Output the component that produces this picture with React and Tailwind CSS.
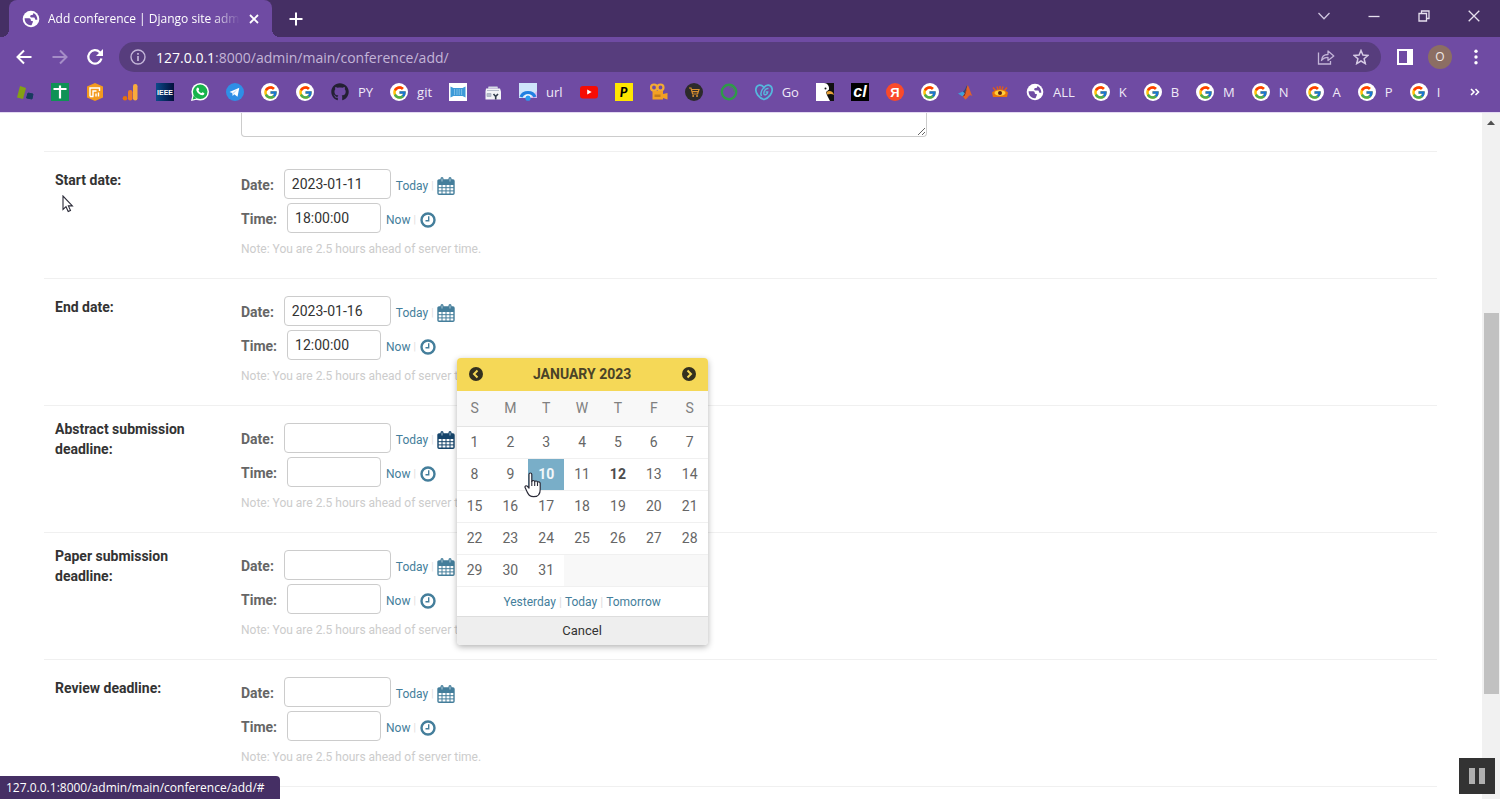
import React, { useState } from "react";
import { FcGoogle } from "react-icons/fc";
import { FaGithub } from "react-icons/fa";

const GoogleIcon = () => (
  <span className="w-[18px] h-[18px] rounded-full bg-white flex items-center justify-center">
    <FcGoogle size={15} />
  </span>
);

const GlobeIcon = () => (
  <svg width="18" height="18" viewBox="0 0 18 18">
    <circle cx="9" cy="9" r="8.300" fill="#fff" />
    <path
      d="M2.600 8.200h4.600c1.200 0 1.500.8 1.500 1.600 0 .9.500 1.200 1.400 1.200.8 0 1 .6.700 1.300l-1.300 2.900c-2.600.4-4.200-.8-5.400-2.200-1-1.300-1.500-3-1.500-4.800z"
      fill="#6f4ba3"
    />
    <path
      d="M11.200 2.900c.4 1.500-.4 2-1.700 2.100-1 .1-1.300.6-1.300 1.300 0 1 .9 1.300 1.900 1.300h1.500c.9 0 1.200.5 1.400 1.300.2.700.9 1 2.300.9.200-3.200-1.300-5.800-4.100-6.900z"
      fill="#6f4ba3"
    />
  </svg>
);

const BlocksIcon = () => (
  <svg width="18" height="18" viewBox="0 0 18 18">
    <path d="M4 3l6 2-3 11-6-1.500z" fill="#84a014" />
    <path d="M12 10l5 1-1 5-5.500-1z" fill="#173a5e" stroke="#173a5e" strokeLinejoin="round" />
  </svg>
);

const SheetIcon = () => (
  <svg width="18" height="18" viewBox="0 0 18 18">
    <path d="M0 0h18v18H0z" fill="#0f9255" />
    <path d="M2.500 6h13M9 2.500v13" stroke="#fff" strokeWidth="2.200" />
  </svg>
);

const HexIcon = () => (
  <svg width="18" height="18" viewBox="0 0 18 18">
    <path d="M9 0l8 3.500v11L9 18l-8-3.500v-11z" fill="#f39a1e" />
    <path d="M4 13.500V5h9.500v3M4 13.500h3.500M7 13.500V8h3.500M10 13.500v-3M12.500 13.500v-4" fill="none" stroke="#fff" strokeWidth="1.400" />
  </svg>
);

const AnalyticsIcon = () => (
  <svg width="18" height="18" viewBox="0 0 18 18">
    <rect x="12" y="1" width="4.500" height="16.500" rx="2.200" fill="#f9ab3c" />
    <rect x="7" y="7" width="4.500" height="10.500" rx="2.200" fill="#ee7a26" />
    <circle cx="4" cy="15.200" r="2.300" fill="#e8710a" />
  </svg>
);

const IeeeIcon = () => (
  <span className="w-[18px] h-[18px] bg-gradient-to-r from-[#0d4a8a] to-[#03103c] flex items-center justify-center text-[7px] leading-none font-bold font-['Liberation_Sans',sans-serif] text-white">
    IEEE
  </span>
);

const WhatsappIcon = () => (
  <svg width="18" height="18" viewBox="0 0 18 18">
    <circle cx="9.200" cy="8.800" r="8.800" fill="#fff" />
    <path d="M0 18l1.500-6 5 4.500z" fill="#fff" />
    <circle cx="9.200" cy="8.800" r="7.300" fill="#19b34c" />
    <path d="M1.600 16.500l1-4 3 3z" fill="#19b34c" />
    <path
      d="M6.300 4.800c.9-.7 1.400.3 1.800 1.500.2.700-.7.900-.5 1.500.6 1.100 1.400 1.800 2.500 2.300.6.200.9-1 1.500-.8 1.200.5 2.200 1 1.600 1.900-.8 1.300-2.400 1.200-3.900.5-1.900-.9-3.300-2.300-3.900-4.100-.3-1.100.1-2.200.9-2.800z"
      fill="#fff"
    />
  </svg>
);

const TelegramIcon = () => (
  <svg width="18" height="18" viewBox="0 0 18 18">
    <circle cx="9" cy="9" r="9" fill="#2f8fe6" />
    <path d="M3.500 9l9.800-4.200-1.800 8.900-3.300-2.400-1.500 1.600-.4-3z" fill="#fff" />
    <path d="M6.300 10l5-3.600-3.600 4.300" fill="#bcd9f5" />
  </svg>
);

const BarcodeIcon = () => (
  <svg width="18" height="18" viewBox="0 0 18 18">
    <path d="M0 0h18v18H0z" fill="#fff" />
    <path d="M1.500 3.500L4.500 5h9l3-1.500v11l-3-1.500h-9l-3 1.500z" fill="#3d9ad8" />
    <path d="M5.500 6v6M8 6v6M10.200 6v6M12.600 6v6" stroke="#8cc6ea" strokeWidth=".8" />
  </svg>
);

const StoreIcon = () => (
  <svg width="18" height="18" viewBox="0 0 18 18">
    <path d="M4.500 3.500h9l.5 2H4z" fill="#d5dbe6" />
    <path d="M2 5.500h14l1 3v8H1.500v-8z" fill="#f2f3f7" />
    <path d="M3 7.500h12M3 10.500h4v3H3z" fill="#b5bccb" stroke="#a6adbf" strokeWidth=".8" />
    <path d="M9.500 11l2.200 2.500v3M14 11l-2.300 2.500" fill="none" stroke="#303c4c" strokeWidth="1.600" />
  </svg>
);

const UrlIcon = () => (
  <svg width="18" height="18" viewBox="0 0 18 18">
    <path d="M0 0h18v15H0z" fill="#cfe4fb" />
    <path d="M11 15l7-7v7z" fill="#d9b8f0" />
    <path d="M2 14a7.500 7 0 0 1 14 0" fill="none" stroke="#217fe2" strokeWidth="3.200" />
    <path d="M6 14a3.500 3.500 0 0 1 6 0" fill="none" stroke="#fff" strokeWidth="1.500" />
    <circle cx="9" cy="15.200" r="2.600" fill="#2b9af0" />
  </svg>
);

const YoutubeIcon = () => (
  <svg width="18" height="18" viewBox="0 0 18 18">
    <rect x="0" y="3" width="18" height="12.500" rx="3" fill="#f60c05" />
    <path d="M7.200 6.500v5l4.500-2.500z" fill="#fff" />
  </svg>
);

const ParkIcon = () => (
  <span className="w-[18px] h-[18px] bg-[#ffe600] flex items-center justify-center text-[13px] leading-none font-black italic font-['Lato',sans-serif] text-black">
    P
  </span>
);

const CameraIcon = () => (
  <svg width="18" height="18" viewBox="0 0 18 18">
    <circle cx="4" cy="4.500" r="3" fill="none" stroke="#f3aa33" strokeWidth="2.200" />
    <circle cx="10.500" cy="4.500" r="3" fill="none" stroke="#f3aa33" strokeWidth="2.200" />
    <path d="M2.500 8h10.500v8.500H2.500zM13 11l4.500-1v6.500L13 15z" fill="#f3a024" />
    <path d="M4.500 11.500h6v2.500h-6z" fill="#c47a1b" />
  </svg>
);

const CartIcon = () => (
  <svg width="18" height="18" viewBox="0 0 18 18">
    <circle cx="9" cy="9" r="9" fill="#2c2a2b" />
    <path d="M4 5h2l1.600 6h5l1.400-4.500H6.600M7.500 8.700h5.700" fill="none" stroke="#d9902f" strokeWidth="1.200" />
    <circle cx="8.200" cy="13" r="1" fill="#d9902f" />
    <circle cx="12" cy="13" r="1" fill="#d9902f" />
  </svg>
);

const RingIcon = () => (
  <svg width="18" height="18" viewBox="0 0 18 18">
    <circle cx="9" cy="9" r="7.200" fill="none" stroke="#2f9a48" strokeWidth="2.400" />
    <path d="M9 4a5 5 0 0 1 5 5" fill="none" stroke="#4f7d62" strokeWidth="1" />
  </svg>
);

const GodaddyIcon = () => (
  <svg width="18" height="18" viewBox="0 0 18 18">
    <path
      d="M9 16.500C4 15 0 10 1 5.500 2 1.500 6.500 1 9 4.500c2.500-3.500 7-3 8 1 1 4.500-3 9.500-8 11z"
      fill="none"
      stroke="#55b8dd"
      strokeWidth="1.700"
    />
    <path d="M9 4.500C6.500 7 5 10 6.500 13M13.500 5.500c-3-.5-5 3-4.500 5.500.5 1.500 3.500.5 3.700-2h-2" fill="none" stroke="#55b8dd" strokeWidth="1.500" />
  </svg>
);

const EagleIcon = () => (
  <svg width="18" height="18" viewBox="0 0 18 18">
    <path d="M0 0h18v18H0z" fill="#111" />
    <path d="M0 0h8c3.500 0 5.500 3 5 6.500l-3 2.500c.5 2.500 2 5 4 9H0z" fill="#fff" />
    <path d="M10.500 9c3-2 6.500-1 7.500 3-2-1.500-4.500-1-7-.5z" fill="#e8a33a" />
    <circle cx="9.500" cy="5.500" r="1" fill="#111" />
  </svg>
);

const ClIcon = () => (
  <span className="w-[18px] h-[18px] bg-black flex items-center justify-center text-[16px] leading-none font-bold italic font-['Liberation_Sans',sans-serif] text-white">
    cl
  </span>
);

const YandexIcon = () => (
  <span className="w-[18px] h-[18px] rounded-full bg-[#fa4a2a] flex items-center justify-center text-[13px] leading-none font-bold font-['Liberation_Sans',sans-serif] text-white">
    Я
  </span>
);

const MatlabIcon = () => (
  <svg width="18" height="18" viewBox="0 0 18 18">
    <path d="M2 10.500l5-2 2.500 2.500-3 2.500z" fill="#3f9fd8" />
    <path d="M7 8.500c2-.5 3-5.500 4.500-6.500L9.500 11z" fill="#2b4a74" />
    <path d="M11.500 2c1.500 1 3 8 5 11-2-1.500-3-1-4.500 1-1 1.500-2 2.500-3 2.500-.5-1.500-1.500-2.500-2.500-3 2.500-1.500 4-8 5-11.500z" fill="#e0622a" />
    <path d="M11.500 2c-1 4-1 7-3 11-.5 0-1.500.5-2 .5 3-2 4-8 5-11.500z" fill="#7c2a21" />
  </svg>
);

const EyeIcon = () => (
  <svg width="18" height="18" viewBox="0 0 18 18">
    <path d="M2 4.500l2.500 3M6 3.500l1 3M9 3v3M12 3.500l-1 3M16 4.500l-2.500 3" stroke="#dd5a1d" strokeWidth="1.500" />
    <path d="M1 9.500c4-4.500 12-4.500 16 0l-1 4.500H2z" fill="#e8730c" />
    <ellipse cx="9" cy="10" rx="5.500" ry="2.700" fill="#ffce3d" />
    <circle cx="9" cy="10" r="2" fill="#5d1f12" />
  </svg>
);

const GithubIcon = () => <FaGithub size={18} color="#232033" />;

const bookmarks = [
  { icon: BlocksIcon },
  { icon: SheetIcon },
  { icon: HexIcon },
  { icon: AnalyticsIcon },
  { icon: IeeeIcon },
  { icon: WhatsappIcon },
  { icon: TelegramIcon },
  { icon: GoogleIcon },
  { icon: GoogleIcon },
  { icon: GithubIcon, label: "PY" },
  { icon: GoogleIcon, label: "git" },
  { icon: BarcodeIcon },
  { icon: StoreIcon },
  { icon: UrlIcon, label: "url" },
  { icon: YoutubeIcon },
  { icon: ParkIcon },
  { icon: CameraIcon },
  { icon: CartIcon },
  { icon: RingIcon },
  { icon: GodaddyIcon, label: "Go" },
  { icon: EagleIcon },
  { icon: ClIcon },
  { icon: YandexIcon },
  { icon: GoogleIcon },
  { icon: MatlabIcon },
  { icon: EyeIcon },
  { icon: GlobeIcon, label: "ALL" },
  { icon: GoogleIcon, label: "K" },
  { icon: GoogleIcon, label: "B" },
  { icon: GoogleIcon, label: "M" },
  { icon: GoogleIcon, label: "N" },
  { icon: GoogleIcon, label: "A" },
  { icon: GoogleIcon, label: "P" },
  { icon: GoogleIcon, label: "I" },
];

const CalendarIcon = ({ color }) => (
  <svg width="18" height="18" viewBox="0 0 18 18" fill="none" stroke={color}>
    <path d="M1 3h16v4H1z" fill={color} stroke="none" />
    <rect x="1" y="3" width="16" height="14.200" rx="1" strokeWidth="1.400" />
    <path d="M1 7.500h16M1 10.700h16M1 13.900h16M5 7v10M9 7v10M13 7v10" strokeWidth="1" />
    <path d="M5 1.500v3M13 1.500v3" strokeWidth="3" strokeLinecap="round" />
    <path d="M5 1.500v3M13 1.500v3" stroke="#cfe0e8" strokeWidth=".8" />
  </svg>
);

const ClockIcon = () => (
  <svg width="16" height="16" viewBox="0 0 16 16" fill="none" stroke="#447e9b">
    <circle cx="8" cy="8" r="6.500" strokeWidth="2.400" />
    <path d="M8.700 4.200v4.500H5.500" strokeWidth="1.400" />
  </svg>
);

const Chevron = ({ flip }) => (
  <svg width="14" height="14" viewBox="0 0 14 14">
    <circle cx="7" cy="7" r="7" fill="#33301f" />
    <path d={flip ? "M5.500 3.500L9 7l-3.500 3.500" : "M8.500 3.500L5 7l3.500 3.500"} fill="none" stroke="#f5d857" strokeWidth="2" />
  </svg>
);

const HandCursor = () => (
  <svg className="absolute -left-1 top-[13px] z-10" width="18" height="26" viewBox="0 0 18 26">
    <path
      d="M5 2.500c0-2 2.800-2 2.800 0v7c.2-1.400 2.800-1.300 2.900.3.300-1.200 2.700-1.100 2.800.6.400-1 2.600-.8 2.700 1v6c0 4-2 7.300-6.600 7.300-3.800 0-4.800-1.800-6.300-4.400L1.200 15.800c-.8-1.600.9-2.700 2.200-1.500L5 16z"
      fill="#fff"
      stroke="#2b2b38"
      strokeWidth="1.200"
      strokeLinejoin="round"
    />
    <path d="M7.800 9v5M10.700 10v4M13.500 11v3" stroke="#2b2b38" strokeWidth="1.100" />
  </svg>
);

const weekDays = ["S", "M", "T", "W", "T", "F", "S"];
const weeks = [0, 1, 2, 3, 4].map((w) =>
  weekDays.map((_, d) => {
    const day = w * 7 + d + 1;
    return day <= 31 ? day : null;
  })
);

const Calendar = () => (
  <div className="absolute left-5 top-[-73px] z-20 w-[251px] rounded bg-white shadow-[0_2px_6px_rgba(0,0,0,0.3)] overflow-hidden text-center">
    <div className="h-[33px] px-3 bg-[#f5d857] flex items-center justify-between">
      <button aria-label="Previous month">
        <Chevron />
      </button>
      <h3 className="text-[14px] font-bold text-[#4a4327]">JANUARY 2023</h3>
      <button aria-label="Next month">
        <Chevron flip />
      </button>
    </div>
    <table className="w-full table-fixed border-collapse text-[14px] text-[#666]">
      <thead>
        <tr className="h-9 bg-[#f8f8f8] border-b border-[#e4e4e4]">
          {weekDays.map((d, i) => (
            <th key={i} className="p-0 font-normal text-[#808080]">
              {d}
            </th>
          ))}
        </tr>
      </thead>
      <tbody>
        {weeks.map((week, i) => (
          <tr key={i} className="h-8 border-b border-[#f0f0f0]">
            {week.map((day, j) => (
              <td
                key={j}
                className={`p-0 ${day === null ? "bg-[#f8f8f8]" : ""} ${day === 10 ? "bg-[#79aec8] text-white font-bold" : ""} ${day === 12 ? "font-bold text-[#4c4c4c]" : ""}`}
              >
                {day === 10 ? (
                  <div className="relative h-[31px] flex items-center justify-center">
                    <button className="text-white/90">10</button>
                    <HandCursor />
                  </div>
                ) : (
                  day && <button>{day}</button>
                )}
              </td>
            ))}
          </tr>
        ))}
      </tbody>
    </table>
    <div className="h-[29px] flex items-center justify-center gap-[3px] text-[12px] text-[#447e9b]">
      <a href="#">Yesterday</a>
      <span className="text-[#ddd]">|</span>
      <a href="#">Today</a>
      <span className="text-[#ddd]">|</span>
      <a href="#">Tomorrow</a>
    </div>
    <button className="block w-full h-[29px] bg-[#eee] border-t border-[#ddd] text-[13px] text-[#333]">
      Cancel
    </button>
  </div>
);

const DateTimeRow = ({ id, label, date, time, twoLines, open }) => {
  const [dateValue, setDateValue] = useState(date);
  const [timeValue, setTimeValue] = useState(time);

  return (
    <div className="flex border-b border-[#f0f0f0] pl-[11px] pt-[17px] pb-[19px]">
      <div className={`w-[186px] shrink-0 pr-8 text-[14px] leading-5 font-bold text-[#333] ${twoLines ? "-mt-1" : "mt-px"}`}>
        {label}
      </div>
      <div className="flex flex-col text-[14px]">
        <div className="flex items-center h-[30px]">
          <label htmlFor={`${id}_0`} className="mt-[3px] font-bold text-[#666] mr-[10px]">
            Date:
          </label>
          <input
            id={`${id}_0`}
            value={dateValue}
            onChange={(e) => setDateValue(e.target.value)}
            className="w-[107px] h-[30px] px-[7px] rounded border border-[#ccc] text-[14px] text-[#333]"
          />
          <a href="#" className="mt-[3px] ml-[5px] text-[12px] text-[#447e9b]">
            Today
          </a>
          <span className="mt-[3px] mx-[3px] text-[10px] text-[#ddd]">|</span>
          <span className="relative mt-[3px]">
            <button aria-label="Choose a date" className="block">
              <CalendarIcon color={open ? "#16456b" : "#447e9b"} />
            </button>
            {open && <Calendar />}
          </span>
        </div>
        <div className="flex items-center h-[30px] mt-1">
          <label htmlFor={`${id}_1`} className="mt-[3px] font-bold text-[#666] mr-[10px]">
            Time:
          </label>
          <input
            id={`${id}_1`}
            value={timeValue}
            onChange={(e) => setTimeValue(e.target.value)}
            className="w-[94px] h-[30px] px-[7px] rounded border border-[#ccc] text-[14px] text-[#333]"
          />
          <a href="#" className="mt-[3px] ml-[5px] text-[12px] text-[#447e9b]">
            Now
          </a>
          <span className="mt-[3px] mx-[3px] text-[10px] text-[#ddd]">|</span>
          <button aria-label="Choose a time" className="mt-[3px] ml-px">
            <ClockIcon />
          </button>
        </div>
        <p className="mt-[6px] text-[12px] leading-5 text-[#ccc]">
          Note: You are 2.5 hours ahead of server time.
        </p>
      </div>
    </div>
  );
};

const rows = [
  { id: "start_date", label: "Start date:", date: "2023-01-11", time: "18:00:00" },
  { id: "end_date", label: "End date:", date: "2023-01-16", time: "12:00:00" },
  { id: "abstract_deadline", label: "Abstract submission deadline:", date: "", time: "", twoLines: true, open: true },
  { id: "paper_deadline", label: "Paper submission deadline:", date: "", time: "", twoLines: true },
  { id: "review_deadline", label: "Review deadline:", date: "", time: "" },
];

const TabStrip = () => (
  <div className="h-[37px] bg-[#452f64] flex items-center justify-between">
    <div className="flex items-center h-full">
      <div className="relative ml-[9px] w-[263px] h-full bg-[#6f4ba3] rounded-t-lg flex items-center pl-[13px] pr-3">
        <span className="absolute -left-2 bottom-0 w-2 h-2 bg-[radial-gradient(circle_at_0_0,transparent_8px,#6f4ba3_8px)]" />
        <span className="absolute -right-2 bottom-0 w-2 h-2 bg-[radial-gradient(circle_at_100%_0,transparent_8px,#6f4ba3_8px)]" />
        <GlobeIcon />
        <span className="ml-2 w-[192px] overflow-hidden whitespace-nowrap text-[12px] text-white [mask-image:linear-gradient(to_right,#000_85%,transparent)]">
          Add conference | Django site admin
        </span>
        <button aria-label="Close tab" className="ml-[9px]">
          <svg width="10" height="10" viewBox="0 0 10 10" stroke="#fff" strokeWidth="1.800">
            <path d="M1 1l8 8M9 1L1 9" />
          </svg>
        </button>
      </div>
      <button aria-label="New tab" className="ml-[17px]">
        <svg width="14" height="14" viewBox="0 0 14 14" stroke="#fff" strokeWidth="2">
          <path d="M7 .5v13M.5 7h13" />
        </svg>
      </button>
    </div>
    <div className="flex items-center gap-[38px] pr-5 pb-[6px]">
      <button aria-label="Search tabs">
        <svg width="12" height="12" viewBox="0 0 12 12" fill="none" stroke="#cfc5df" strokeWidth="1.300">
          <path d="M.5 3L6 8.800 11.500 3" />
        </svg>
      </button>
      <button aria-label="Minimize">
        <svg width="12" height="12" viewBox="0 0 12 12" stroke="#e6e0ee" strokeWidth="1.300">
          <path d="M.5 6.500h11" />
        </svg>
      </button>
      <button aria-label="Restore">
        <svg width="12" height="12" viewBox="0 0 12 12" fill="none" stroke="#e6e0ee" strokeWidth="1.300">
          <path d="M1 3.500h7.500V11H1zM3.500 3.500V1H11v7.500H8.500" />
        </svg>
      </button>
      <button aria-label="Close">
        <svg width="12" height="12" viewBox="0 0 12 12" stroke="#e6e0ee" strokeWidth="1.300">
          <path d="M.7.700l10.600 10.600M11.300.700L.700 11.300" />
        </svg>
      </button>
    </div>
  </div>
);

const Toolbar = () => (
  <div className="h-10 flex items-center pl-4 pr-[22px]">
    <button aria-label="Back">
      <svg width="16" height="16" viewBox="0 0 16 16" fill="none" stroke="#fff" strokeWidth="2">
        <path d="M15.500 8H2M8 1.500L1.500 8 8 14.500" />
      </svg>
    </button>
    <button aria-label="Forward" className="ml-5">
      <svg width="16" height="16" viewBox="0 0 16 16" fill="none" stroke="#a58dc7" strokeWidth="2">
        <path d="M.5 8H14M8 1.500L14.500 8 8 14.500" />
      </svg>
    </button>
    <button aria-label="Reload" className="ml-[18px]">
      <svg width="18" height="18" viewBox="0 0 18 18" fill="none" stroke="#fff" strokeWidth="2.200">
        <path d="M15.500 10.500A6.700 6.700 0 1 1 13.800 4.200L15.500 6" />
        <path d="M17 1v7h-7z" fill="#fff" stroke="none" />
      </svg>
    </button>
    <div className="ml-[15px] flex-1 h-[30px] rounded-full bg-[#573d7d] flex items-center pl-[11px] pr-3">
      <svg width="16" height="16" viewBox="0 0 16 16" fill="none" stroke="#c3b5d8" strokeWidth="1.400">
        <circle cx="8" cy="8" r="7" />
        <path d="M8 7v5M8 4v1.700" strokeWidth="1.700" />
      </svg>
      <p className="ml-[10px] flex-1 text-[14px] text-[#c3b5d8]">
        <span className="text-white">127.0.0.1</span>:8000/admin/main/conference/add/
      </p>
      <button aria-label="Share">
        <svg width="18" height="16" viewBox="0 0 18 16" fill="none" stroke="#c3b5d8" strokeWidth="1.300">
          <path d="M1.500 3.500v11.500h12V12" />
          <path d="M4.500 11.500c.3-4 2.500-6 6.500-6V2l5.800 5L11 11.500V8.300c-3 0-5 1-6.500 3.200z" strokeLinejoin="round" />
        </svg>
      </button>
      <button aria-label="Bookmark" className="ml-[18px]">
        <svg width="16" height="16" viewBox="0 0 16 16" fill="none" stroke="#d5cae4" strokeWidth="1.500">
          <path d="M8 1.500l1.900 4.600 5 .4-3.800 3.200 1.200 4.900L8 12l-4.300 2.600 1.200-4.900L1.100 6.500l5-.4z" />
        </svg>
      </button>
    </div>
    <button aria-label="Side panel" className="ml-4">
      <svg width="16" height="16" viewBox="0 0 16 16">
        <path d="M0 0h16v16H0zM2 2v12h8V2z" fill="#fff" fillRule="evenodd" />
      </svg>
    </button>
    <button className="ml-[15px] w-6 h-6 rounded-full bg-[#8c6e63] text-[12px] leading-6 text-[#f0e9e6]">
      O
    </button>
    <button aria-label="Menu" className="ml-[22px]">
      <svg width="4" height="16" viewBox="0 0 4 16" fill="#fff">
        <circle cx="2" cy="2.200" r="1.700" />
        <circle cx="2" cy="8" r="1.700" />
        <circle cx="2" cy="13.800" r="1.700" />
      </svg>
    </button>
  </div>
);

const BookmarksBar = () => (
  <div className="h-[36px] flex items-center justify-between pl-4 pr-5 pb-[5px] border-b border-[#e3d9f2]">
    <div className="flex items-center gap-[17px]">
      {bookmarks.map(({ icon: Icon, label }, i) => (
        <a key={i} href="#" aria-label={label || "Bookmark"} className="flex items-center gap-[9px] text-[13px] leading-[18px] text-[#efe9f7]">
          <Icon />
          {label && <span>{label}</span>}
        </a>
      ))}
    </div>
    <button aria-label="More bookmarks">
      <svg width="10" height="8" viewBox="0 0 10 8" fill="none" stroke="#fff" strokeWidth="1.600">
        <path d="M1 1l3 3-3 3M5.500 1l3 3-3 3" />
      </svg>
    </button>
  </div>
);

export default function App() {
  return (
    <div className="relative h-screen flex flex-col overflow-hidden bg-white">
      <header className="shrink-0 bg-[#6f4ba3] font-['Open_Sans',sans-serif]">
        <TabStrip />
        <Toolbar />
        <BookmarksBar />
      </header>

      <div className="flex-1 min-h-0 flex">
        <main className="flex-1 overflow-hidden pl-11 pr-[45px] font-['Roboto',sans-serif]">
          <div className="pl-[197px] pb-[14px] border-b border-[#f0f0f0]">
            <textarea
              aria-label="Description"
              className="block w-[686px] h-6 rounded-b border border-t-0 border-[#ccc] resize overflow-hidden"
            />
          </div>
          {rows.map((row) => (
            <DateTimeRow key={row.id} {...row} />
          ))}
        </main>

        {/* scrollbar */}
        <div className="w-[18px] bg-[#f1f1f1] flex flex-col items-center pt-[7px]">
          <svg width="8" height="5" viewBox="0 0 8 5">
            <path d="M0 5l4-4.500L8 5z" fill="#505050" />
          </svg>
          <div className="mt-[188px] w-[15px] h-[381px] bg-[#c1c1c1]" />
        </div>
      </div>

      {/* mouse pointer */}
      <svg className="absolute left-[62px] top-[195px]" width="12" height="18" viewBox="0 0 12 18">
        <path
          d="M1 1v13.500l3-2.800 2.200 4.800 2.300-1-2.100-4.600h4z"
          fill="#fff"
          stroke="#2b2b38"
          strokeWidth="1.100"
        />
      </svg>

      <div className="absolute left-0 bottom-0 w-[280px] h-[23px] pl-[6px] rounded-tr bg-[#452f64] text-[12px] leading-[23px] text-white font-['Open_Sans',sans-serif]">
        127.0.0.1:8000/admin/main/conference/add/#
      </div>

      <button aria-label="Pause" className="absolute right-[5px] bottom-[5px] w-9 h-9 bg-[#333] flex items-center justify-center gap-1">
        <span className="w-[6px] h-4 bg-[#b0b0b0]" />
        <span className="w-[6px] h-4 bg-[#b0b0b0]" />
      </button>
    </div>
  );
}
